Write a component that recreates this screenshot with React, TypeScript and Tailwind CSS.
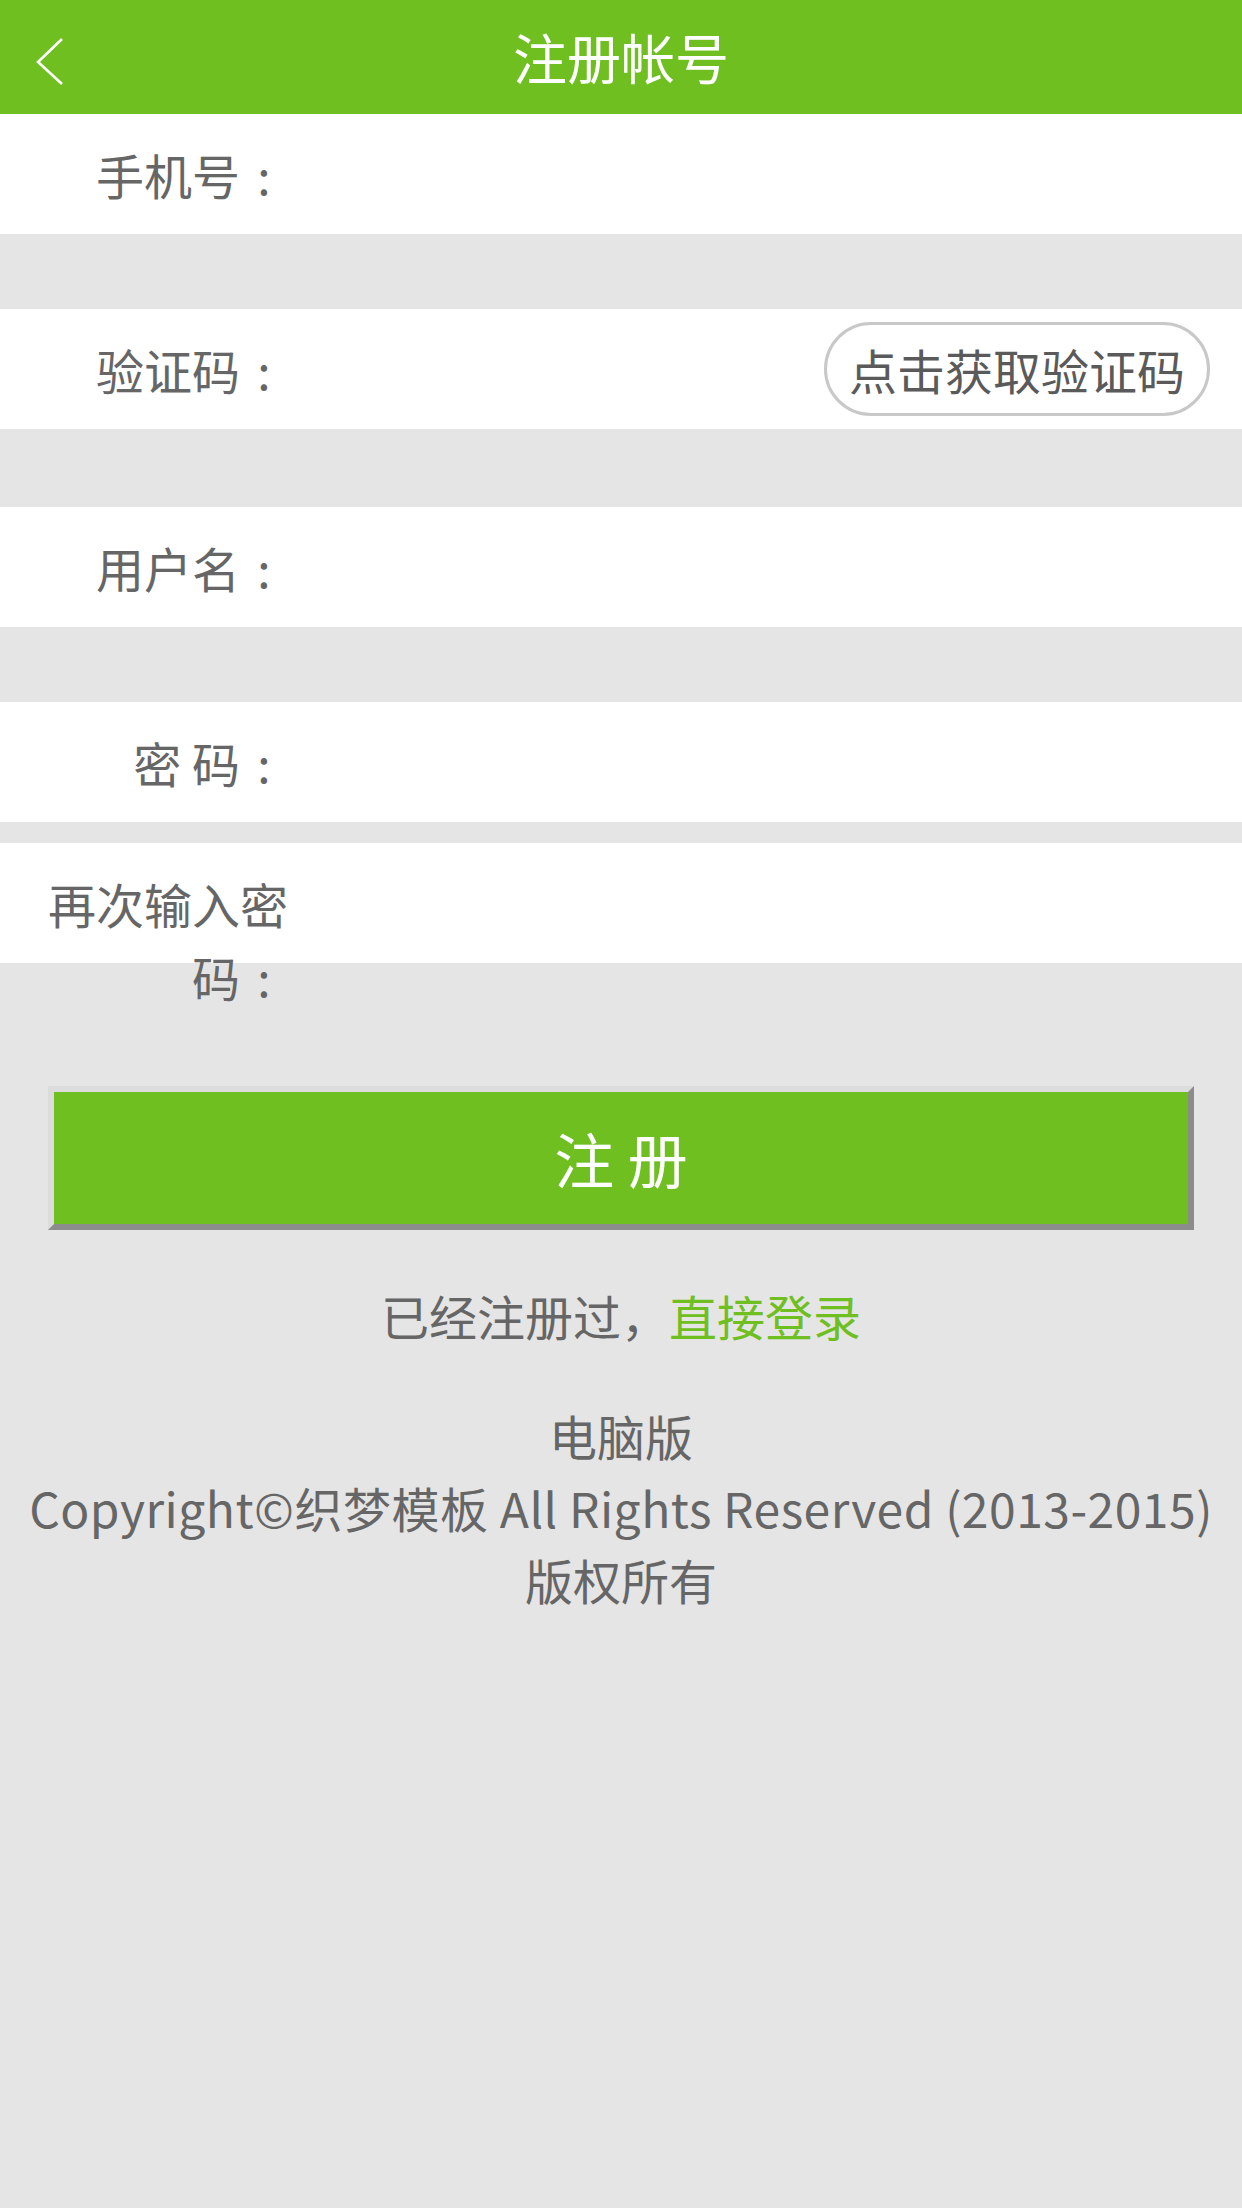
const font = { fontFamily: '"Noto Sans CJK SC", "Noto Sans", sans-serif' }

const Row = ({ label, mt, children }: { label: string; mt: string; children?: React.ReactNode }) => {
  return (
    <div className={`bg-white h-[120px] flex items-start ${mt}`}>
      <label className="w-[240px] ml-[48px] shrink-0 text-right text-[48px] leading-[73px] pt-[24px] text-[#666666]">
        {label}
        <span className="inline-block w-[48px] text-center">:</span>
      </label>
      <input className="flex-1 h-[120px] bg-transparent outline-none text-[48px] text-[#333] px-[10px] min-w-0" />
      {children}
    </div>
  )
}

const App = () => {
  return (
    <div className="w-[1242px] min-h-[2208px] bg-[#e5e5e5]" style={font}>
      <div className="relative h-[114px] bg-[#70bf21] flex items-center justify-center">
        <svg className="absolute left-[30px] top-[30px]" width="40" height="60" viewBox="0 0 40 60">
          <path d="M32 9 L8 32 L32 54" fill="none" stroke="#fff" strokeWidth="2.6" />
        </svg>
        <h1 className="text-white text-[54px] leading-[114px] font-normal">注册帐号</h1>
      </div>

      <Row label="手机号" mt="mt-0" />
      <Row label="验证码" mt="mt-[75px]">
        <button className="mt-[13px] mr-[32px] h-[94px] px-[22px] rounded-full border-[3px] border-[#c8c8c8] bg-white text-[48px] leading-[88px] text-[#5a5a5a] whitespace-nowrap shrink-0">
          点击获取验证码
        </button>
      </Row>
      <Row label="用户名" mt="mt-[78px]" />
      <Row label="密 码" mt="mt-[75px]" />
      <Row label="再次输入密码" mt="mt-[21px]" />

      <div className="mx-[48px] mt-[123px] h-[144px] border-[6px] border-t-[#dcdcdc] border-l-[#dcdcdc] border-r-[#8c8c8c] border-b-[#8c8c8c] bg-[#70bf21] flex items-center justify-center">
        <span className="text-white text-[60px] leading-none">注 册</span>
      </div>

      <p className="mt-[49px] text-center text-[48px] leading-[72px] text-[#666666]">
        已经注册过，<a className="text-[#70bf21]">直接登录</a>
      </p>

      <div className="mt-[48px] text-center text-[48px] leading-[72px] text-[#666666]">
        <p>电脑版</p>
        <p className="whitespace-nowrap tracking-[0.5px]">Copyright©织梦模板 All Rights Reserved (2013-2015)</p>
        <p>版权所有</p>
      </div>
    </div>
  )
}

export default App
